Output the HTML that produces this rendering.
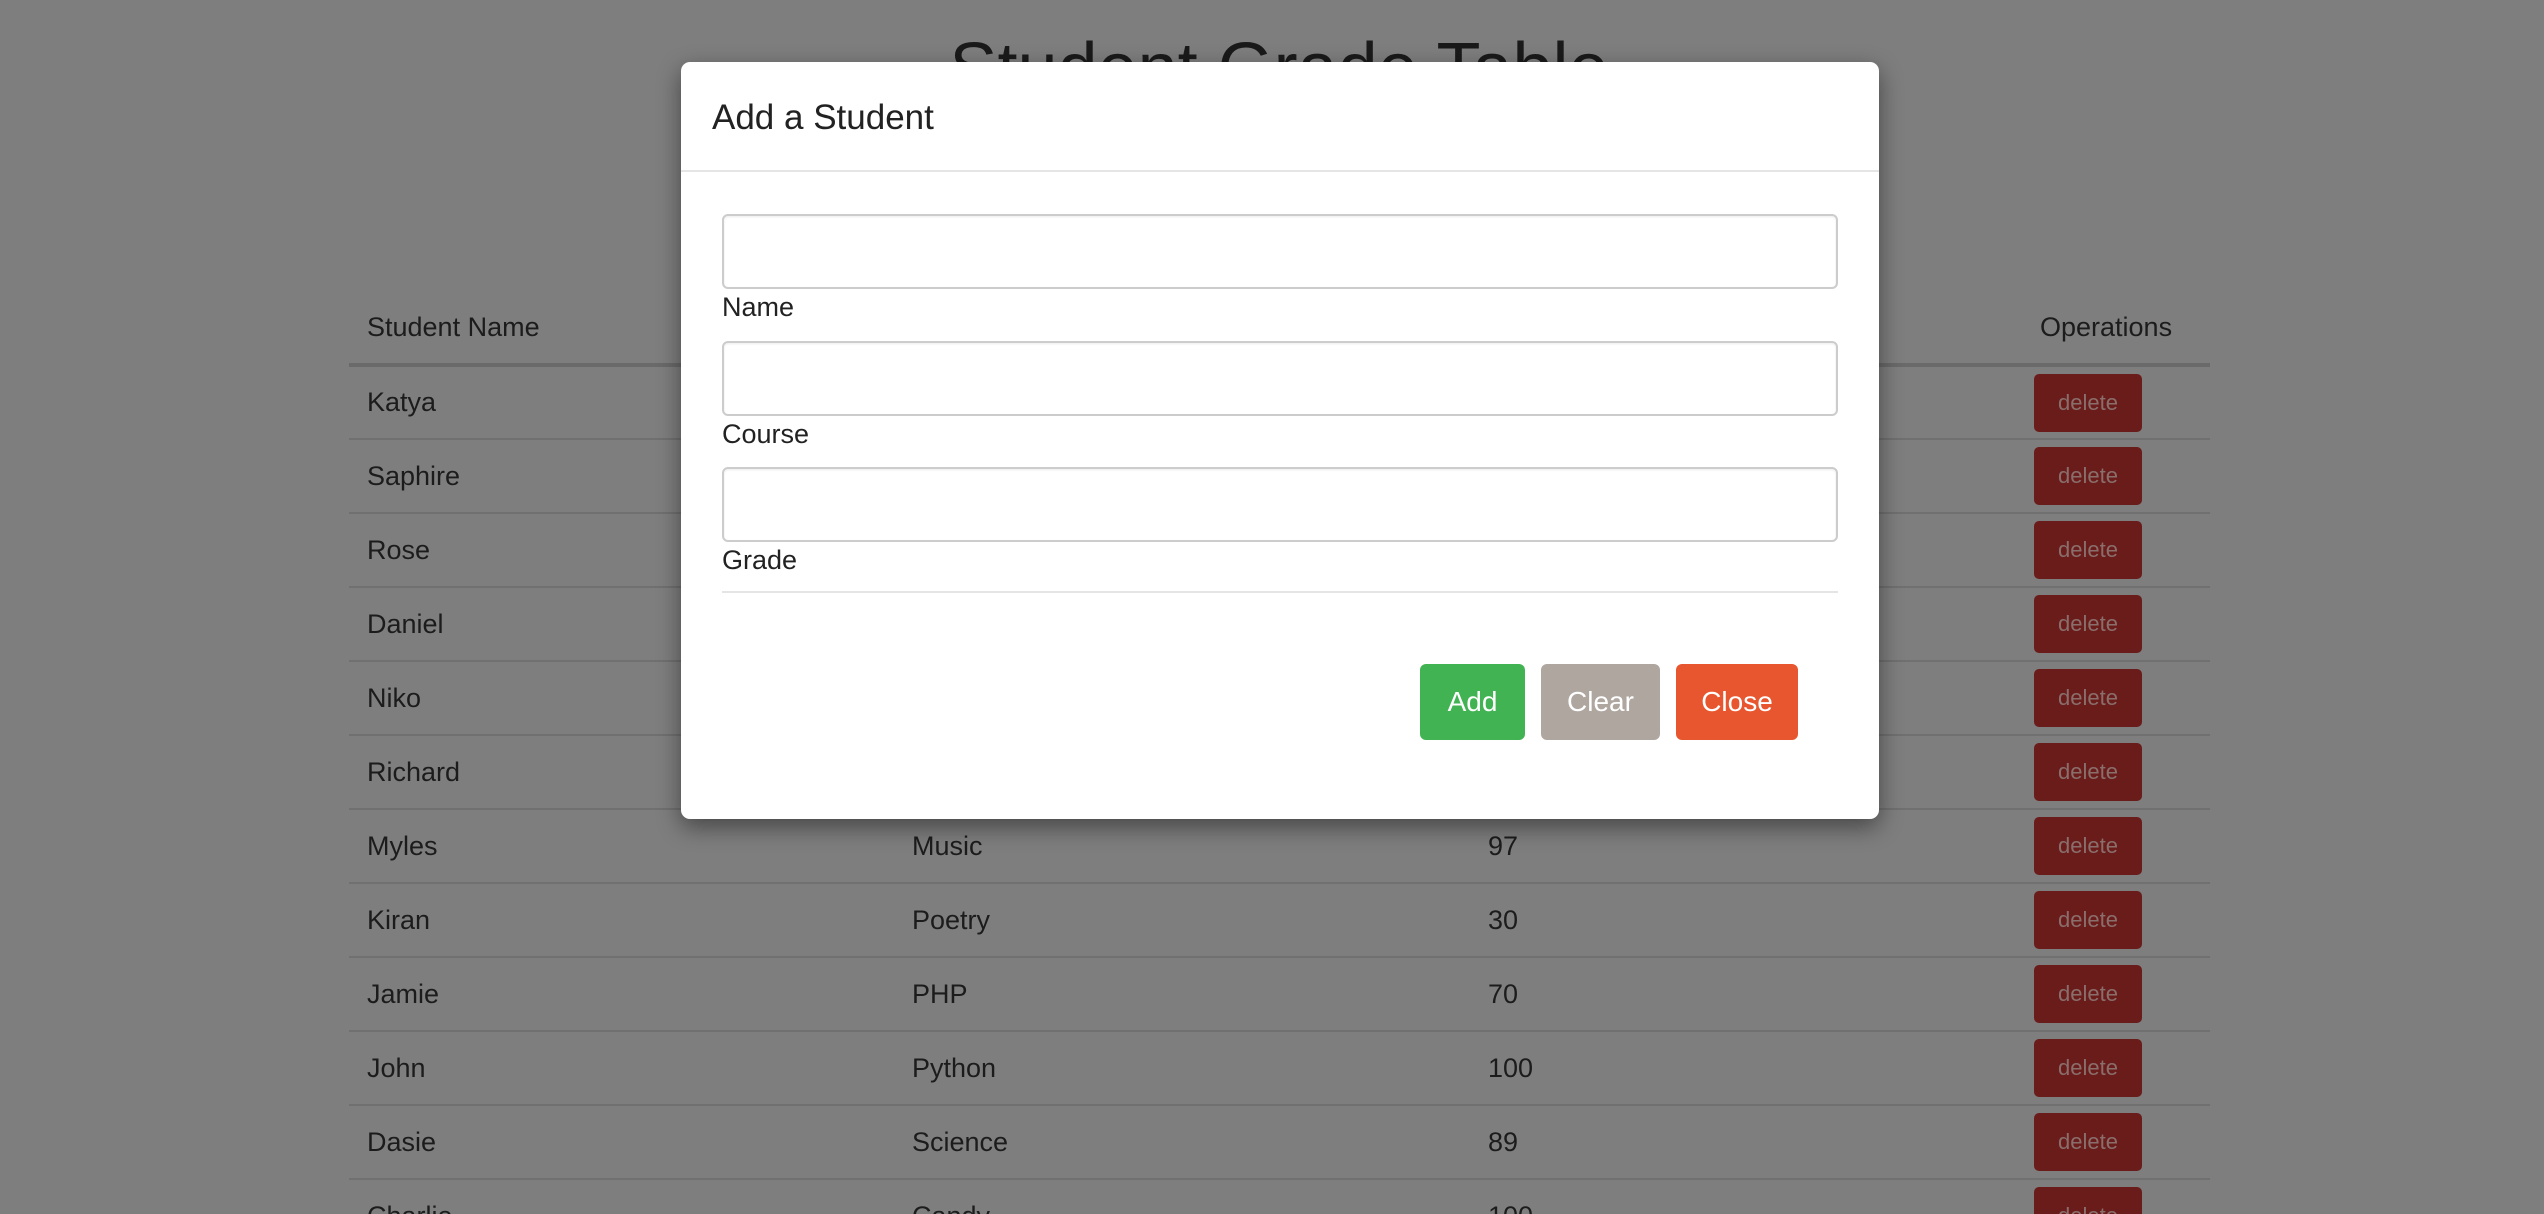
<!DOCTYPE html>
<html><head><meta charset="utf-8"><style>
*{box-sizing:border-box;margin:0;padding:0}
html,body{width:2544px;height:1214px;overflow:hidden}
body{background:#7e7e7e;font-family:"Liberation Sans",sans-serif;color:#1c1c1c;position:relative}
.title{position:absolute;left:0;width:2558px;text-align:center;top:28px;font-size:72px;color:#1a1a1a}
table{position:absolute;left:349px;top:292px;width:1861px;border-collapse:collapse;font-size:27px}
th{text-align:left;font-weight:normal;height:73px;padding-left:18px;border-bottom:4px solid #6a6a6a;vertical-align:middle}
td{height:74px;padding-left:18px;border-bottom:2px solid #707070;vertical-align:middle}
td.op{padding-left:0}
.del{display:inline-block;width:108px;height:58px;background:#6a1c1a;border-radius:5px;color:#8a6e6c;font-size:22px;line-height:58px;text-align:center}
.modal{position:absolute;left:681px;top:62px;width:1198px;height:757px;background:#fff;border-radius:9px;box-shadow:0 8px 24px rgba(0,0,0,.45)}
.mh{height:110px;border-bottom:2px solid #e5e5e5;padding-left:31px;font-size:35px;line-height:112px;color:#222}
.inp{position:absolute;left:41px;width:1116px;height:75px;border:2px solid #ccc;border-radius:6px;box-shadow:inset 0 1px 2px rgba(0,0,0,.08)}
.lbl{position:absolute;left:41px;font-size:27px;color:#222}
.hr{position:absolute;left:41px;width:1116px;top:529px;border-top:2px solid #e5e5e5}
.btn{position:absolute;top:602px;height:76px;border-radius:6px;color:#fff;font-size:28px;line-height:76px;text-align:center}
</style></head><body>
<div class="title">Student Grade Table</div>
<table>
<tr><th style="width:545px">Student Name</th><th style="width:576px"></th><th style="width:564px"></th><th style="padding-left:6px">Operations</th></tr>
<tr><td>Katya</td><td></td><td></td><td class="op"><span class="del">delete</span></td></tr>
<tr><td>Saphire</td><td></td><td></td><td class="op"><span class="del">delete</span></td></tr>
<tr><td>Rose</td><td></td><td></td><td class="op"><span class="del">delete</span></td></tr>
<tr><td>Daniel</td><td></td><td></td><td class="op"><span class="del">delete</span></td></tr>
<tr><td>Niko</td><td></td><td></td><td class="op"><span class="del">delete</span></td></tr>
<tr><td>Richard</td><td></td><td></td><td class="op"><span class="del">delete</span></td></tr>
<tr><td>Myles</td><td>Music</td><td>97</td><td class="op"><span class="del">delete</span></td></tr>
<tr><td>Kiran</td><td>Poetry</td><td>30</td><td class="op"><span class="del">delete</span></td></tr>
<tr><td>Jamie</td><td>PHP</td><td>70</td><td class="op"><span class="del">delete</span></td></tr>
<tr><td>John</td><td>Python</td><td>100</td><td class="op"><span class="del">delete</span></td></tr>
<tr><td>Dasie</td><td>Science</td><td>89</td><td class="op"><span class="del">delete</span></td></tr>
<tr><td>Charlie</td><td>Candy</td><td>100</td><td class="op"><span class="del">delete</span></td></tr>
</table>
<div class="modal">
<div class="mh">Add a Student</div>
<div class="inp" style="top:152px"></div>
<div class="lbl" style="top:230px">Name</div>
<div class="inp" style="top:279px"></div>
<div class="lbl" style="top:357px">Course</div>
<div class="inp" style="top:405px"></div>
<div class="lbl" style="top:483px">Grade</div>
<div class="hr"></div>
<div class="btn" style="left:739px;width:105px;background:#41b352">Add</div>
<div class="btn" style="left:860px;width:119px;background:#aea69f">Clear</div>
<div class="btn" style="left:995px;width:122px;background:#e8562f">Close</div>
</div>
</body></html>
